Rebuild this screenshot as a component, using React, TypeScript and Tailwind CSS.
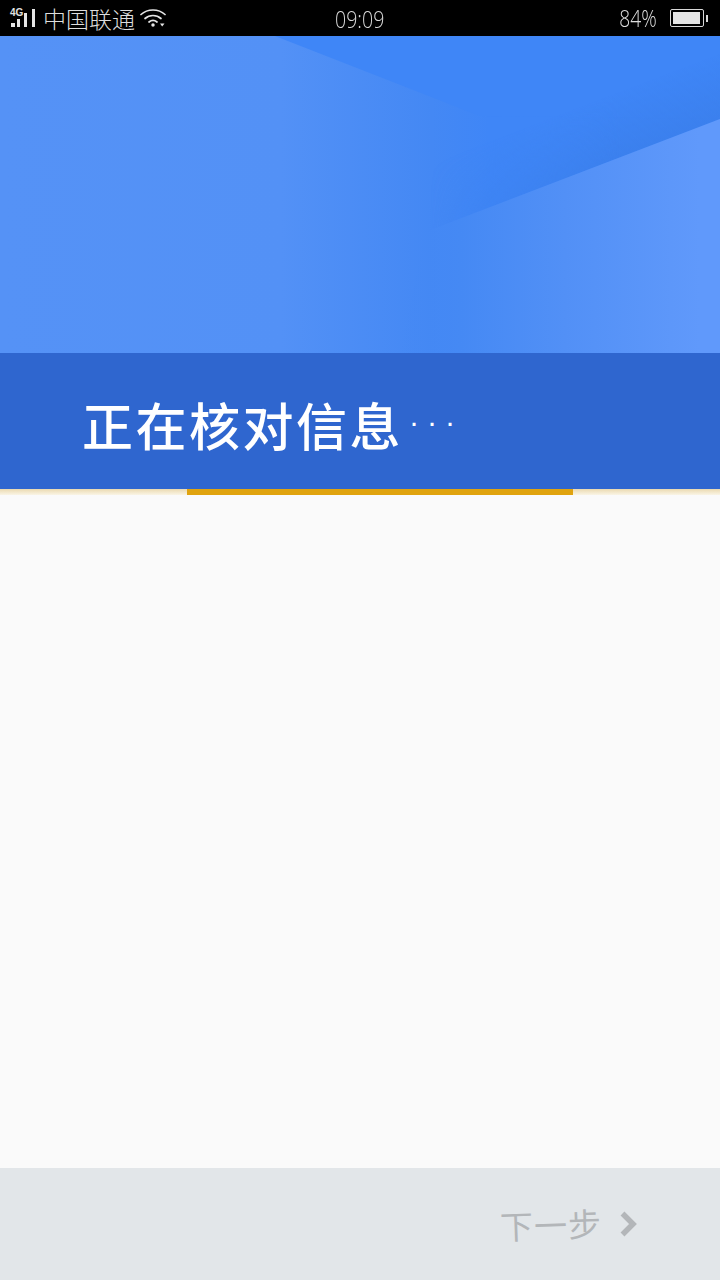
function Signal() {
  return (
    <div className="relative w-[28px] h-[24px]">
      <span className="absolute left-0 top-[1px] text-[10px] leading-[12px] font-bold text-[#e0e0e0] font-['Liberation_Sans',sans-serif]">4G</span>
      <svg width="28" height="24" viewBox="0 0 28 24" className="absolute left-0 top-0">
        <rect x="1" y="17" width="4" height="4" fill="#e6e6e6" />
        <rect x="7" y="13" width="3" height="8" fill="#e6e6e6" />
        <rect x="14" y="7" width="3" height="14" fill="#e6e6e6" />
        <rect x="22" y="3" width="3" height="18" fill="#e6e6e6" />
      </svg>
    </div>
  )
}

function Wifi() {
  return (
    <svg width="26" height="20" viewBox="0 0 26 20" fill="none" stroke="#e6e6e6" strokeWidth="1.7" strokeLinecap="round">
      <path d="M1 6.5C7.5 0.5 18.5 0.5 25 6.5" />
      <path d="M5 10.5C9.5 6.5 16.5 6.5 21 10.5" />
      <path d="M9 14C11.5 12 14.5 12 17 14" />
      <circle cx="13" cy="17" r="0.9" fill="#e6e6e6" />
      <path d="M20 15.5h4.5L22.2 18.5z" fill="#e6e6e6" stroke="none" />
    </svg>
  )
}

function Battery() {
  return (
    <div className="flex items-center">
      <div className="w-[34px] h-[18px] border border-[#d8d8d8] rounded-[2px] p-[2px] flex">
        <div className="w-[27px] bg-[#e4e4e4]" />
      </div>
      <div className="w-[2px] h-[7px] bg-[#d8d8d8] ml-[2px]" />
    </div>
  )
}

function StatusBar() {
  return (
    <div className="relative h-[36px] bg-black flex items-center justify-between pl-[10px] pr-[12px] text-[#dedede]">
      <div className="flex items-center">
        <Signal />
        <span className="ml-[5px] text-[23px] leading-none font-extralight font-['Noto_Sans_CJK_SC',sans-serif]">中国联通</span>
        <div className="ml-[5px]">
          <Wifi />
        </div>
      </div>
      <span className="absolute left-[335px] top-[6px] text-[23px] leading-[26px] font-light text-[#d8d8d8] font-['Open_Sans',sans-serif] scale-x-[0.85] origin-left">09:09</span>
      <div className="flex items-center gap-[13px]">
        <span className="text-[24px] leading-none font-light font-['Open_Sans',sans-serif] scale-x-[0.8] origin-right">84%</span>
        <Battery />
      </div>
    </div>
  )
}

function HeroArt() {
  return (
    <svg width="720" height="317" viewBox="0 0 720 317" className="block">
      <defs>
        <linearGradient id="base" x1="0" y1="0" x2="720" y2="0" gradientUnits="userSpaceOnUse">
          <stop offset="0" stopColor="#5592f6" />
          <stop offset="0.39" stopColor="#5391f6" />
          <stop offset="0.6" stopColor="#4488f4" />
          <stop offset="0.68" stopColor="#3f86f7" />
          <stop offset="1" stopColor="#3f86f7" />
        </linearGradient>
        <linearGradient id="right" x1="400" y1="0" x2="700" y2="0" gradientUnits="userSpaceOnUse">
          <stop offset="0" stopColor="#4488f4" stopOpacity="0" />
          <stop offset="0.2" stopColor="#4589f4" />
          <stop offset="0.55" stopColor="#5290f6" />
          <stop offset="1" stopColor="#6099fb" />
        </linearGradient>
        <linearGradient id="shade" x1="553" y1="81" x2="575" y2="139" gradientUnits="userSpaceOnUse">
          <stop offset="0" stopColor="#3a7eea" stopOpacity="0" />
          <stop offset="1" stopColor="#3a7eea" stopOpacity="0.75" />
        </linearGradient>
        <linearGradient id="shadeFade" x1="430" y1="0" x2="620" y2="0" gradientUnits="userSpaceOnUse">
          <stop offset="0" stopColor="#fff" stopOpacity="0" />
          <stop offset="1" stopColor="#fff" stopOpacity="1" />
        </linearGradient>
        <mask id="shadeMask">
          <rect width="720" height="317" fill="url(#shadeFade)" />
        </mask>
      </defs>
      <rect width="720" height="317" fill="url(#base)" />
      <polygon points="275,0 720,0 720,83 480,80" fill="#3f86f7" />
      <polygon points="720,17 720,83 425,196 425,130" fill="url(#shade)" mask="url(#shadeMask)" />
      <polygon points="720,83 425,196 400,317 720,317" fill="url(#right)" />
    </svg>
  )
}

export default function App() {
  return (
    <div className="w-[720px] h-[1280px] flex flex-col bg-[#fafafa] overflow-hidden">
      <StatusBar />
      <HeroArt />
      <div className="h-[136px] bg-[#2f66cf] pl-[82px] pt-[42px]">
        <p className="text-[51px] leading-[58px] text-white font-['Noto_Sans_CJK_SC',sans-serif] font-medium flex items-center">
          <span className="tracking-[2.5px]">正在核对信息</span>
          <span className="ml-[6px] -mt-[4px] text-[30px] tracking-[8px] font-['Liberation_Sans',sans-serif]">···</span>
        </p>
      </div>
      <div className="h-[6px] bg-gradient-to-b from-[#ead9b0] to-[#faf5e6] flex">
        <div className="ml-[187px] w-[386px] bg-[#e0a30e]" />
      </div>
      <div className="flex-1" />
      <div className="h-[112px] bg-[#e2e6e9] flex items-center justify-end pr-[83px]">
        <span className="text-[33px] leading-none tracking-[1px] font-normal text-[#b3b6b9] font-['Noto_Sans_CJK_SC',sans-serif] -rotate-2">下一步</span>
        <svg width="17" height="26" viewBox="0 0 17 26" fill="none" stroke="#b3b6b9" strokeWidth="5.5" className="ml-[18px]">
          <path d="M2.5 2.5L13 13L2.5 23.5" />
        </svg>
      </div>
    </div>
  )
}
